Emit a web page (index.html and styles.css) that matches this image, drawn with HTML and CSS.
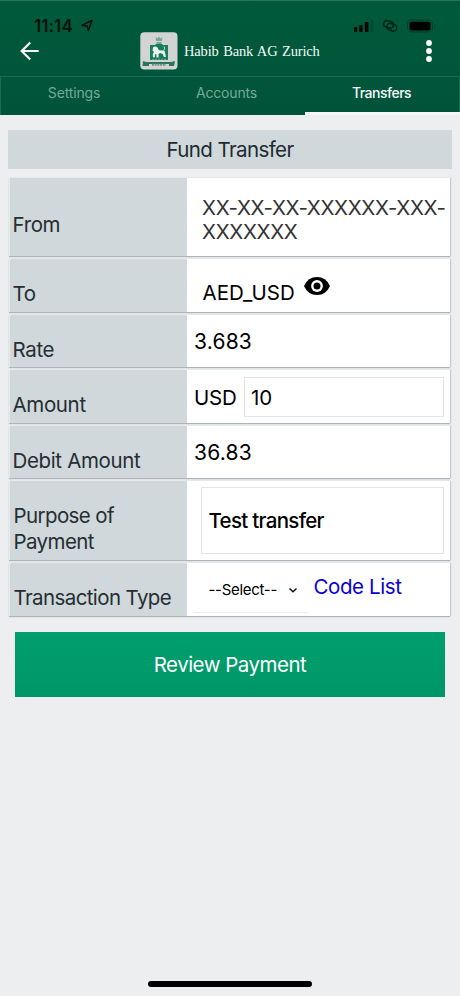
FILE: index.html
```
<!DOCTYPE html>
<html lang="en">
<head>
<meta charset="utf-8">
<meta name="viewport" content="width=device-width">
<title>Fund Transfer</title>
<link rel="stylesheet" href="styles.css">
</head>
<body>
<header class="header">
  <div class="status">
    <span class="time">11:14</span>
    <svg class="location" width="12" height="13" viewBox="0 0 12 13"><path d="M1 6.400 11 1.300 7.400 11.600 6.200 6.900Z" fill="none" stroke="#02120b" stroke-width="1.600" stroke-linejoin="round"/></svg>
    <svg class="indicators" width="84" height="16" viewBox="0 0 84 16">
      <g fill="#010a06"><rect x="1" y="10" width="3.300" height="5" rx=".7"/><rect x="6.200" y="8" width="3.400" height="7" rx=".7"/><rect x="11.800" y="5" width="3.700" height="10" rx=".7"/></g>
      <rect x="17.400" y="2.500" width="3" height="12.500" rx=".7" fill="#004a30"/>
      <g fill="none" stroke="#022117" stroke-width="1.400"><rect x="30.500" y="4.100" width="10" height="6.600" rx="3.300" transform="rotate(18 35.500 7.400)"/><rect x="33.800" y="7" width="10" height="6.600" rx="3.300" transform="rotate(18 38.800 10.300)"/></g>
      <rect x="54.500" y="3" width="25" height="12" rx="3.300" fill="none" stroke="#003d28"/><rect x="56.500" y="4.700" width="21" height="8.800" rx="1.800" fill="#000"/><path d="M81.500 7v4q2-2 0-4" fill="#003d28"/>
    </svg>
  </div>
  <div class="brandbar">
    <svg class="back" width="20" height="20" viewBox="0 0 20 20"><path d="M18.700 10H2M10.200 1.500 1.700 10l8.500 8.500" fill="none" stroke="#fff" stroke-width="2.200"/></svg>
    <svg class="crest" width="38" height="38" viewBox="0 0 38 38">
      <rect x=".3" y=".3" width="37.200" height="37.200" rx="4" fill="#d2d4d3"/>
      <path d="M15.500 5l2 1.500L19 4.500l1.500 2 2-1.500-.7 4h-5.600zM16.500 10h5v2.500h-5z" fill="#79a695"/>
      <path d="M10 13h5l1-1h6l1 1h5v15H10z" fill="#187d5d"/>
      <path d="M13 15.500q1.500-1.700 3.500-.8 1.700.8 2 3.100 2 1 4.500.4 2 0 2.100 2.500l.9 4.200h-2.200l-1-3-2.700-1-1.600 1 .2 3.500h-2.200l-.2-3.700-1.500 1 .2 2.500h-2l-.2-3.200 1.200-2-1.500-1.500z" fill="#edf2ef"/>
      <path d="M24 18.500q1.200-2.700 0-4" fill="none" stroke="#edf2ef" stroke-width=".8"/>
      <path d="M12 27.300h14" stroke="#75a58e" stroke-dasharray="2 1"/>
      <path d="M3 29l3 1h25l4-1-1 5h-5v-2H9v2H2.500z" fill="#28775b"/><path d="M12 32.800h14" stroke="#6b9583" stroke-width="2" stroke-dasharray="2 .7"/>
    </svg>
    <span class="brand">Habib Bank AG Zurich</span>
    <svg class="more" width="8" height="24" viewBox="0 0 8 24" fill="#fff"><circle cx="4" cy="4" r="2.900"/><circle cx="4" cy="12" r="2.900"/><circle cx="4" cy="20" r="2.900"/></svg>
  </div>
  <nav class="tabs"><a class="tab settings">Settings</a><a class="tab accounts">Accounts</a><a class="tab active">Transfers</a></nav>
</header>
<main class="content">
  <h1 class="title"><span>Fund Transfer</span></h1>
  <section class="form">
    <div class="row from"><div class="label">From</div><div class="value masked"><span>XX-XX-XX-XXXXXX-XXX-</span><br><span>XXXXXXX</span></div></div>
    <div class="row"><div class="label">To</div><div class="value account"><span>AED_USD</span><svg class="eye" width="26" height="18" viewBox="0 0 26 18"><path d="M0 9Q4 0 13 0t13 9q-4 9-13 9T0 9" fill="#000"/><circle cx="13" cy="9" r="5.900" fill="#fff"/><circle cx="13" cy="9" r="3.500" fill="#000"/></svg></div></div>
    <div class="row"><div class="label">Rate</div><div class="value number">3.683</div></div>
    <div class="row"><div class="label">Amount</div><div class="value amount"><span class="currency">USD</span><div class="field">10</div></div></div>
    <div class="row"><div class="label">Debit Amount</div><div class="value number">36.83</div></div>
    <div class="row purpose"><div class="label">Purpose of<br>Payment</div><div class="value"><div class="field memo"><span>Test transfer</span></div></div></div>
    <div class="row transaction"><div class="label">Transaction Type</div><div class="value choices"><div class="select"><span>--Select--</span><svg width="10" height="7" viewBox="0 0 10 7"><path d="m1.500 1.500 3.500 3.300 3.500-3.300" fill="none" stroke="#111" stroke-width="1.500"/></svg></div><a class="codes">Code List</a></div></div>
  </section>
  <div class="review"><span>Review Payment</span></div>
</main>
<div class="home"></div>
</body>
</html>
```
FILE: styles.css
```
* { box-sizing: border-box; }
body { margin: 0; width: 460px; height: 996px; overflow: hidden; display: flex; flex-direction: column; background: #eceef0; font-family: Inter, "Liberation Sans", sans-serif; color: #000; }
svg { display: block; flex: none; }
.header { height: 115px; flex: none; background: linear-gradient(#005a3b, #00563a 60%, #005339); border-top: 1px solid #247657; }
.status { height: 31px; padding: 15px 23px 0 34px; display: flex; align-items: flex-start; }
.time { width: 43px; font-size: 17px; line-height: 20px; font-weight: 600; letter-spacing: .1px; white-space: nowrap; color: #02100a; }
.location { margin: 3px 0 0 4px; }
.indicators { margin: 1px 0 0 auto; }
.brandbar { height: 44px; display: flex; padding-left: 20px; }
.back { margin-top: 9px; }
.crest { margin: 0 0 0 99.500px; }
.brand { margin: 9px 0 0 6.500px; width: 138px; font: 14.500px/20px "Liberation Serif", serif; letter-spacing: -.15px; word-spacing: 1px; color: #f3faf6; white-space: nowrap; }
.more { margin: 7px 0 0 102.500px; }
.tabs { height: 39px; border: 1px solid #176d50; border-bottom: 0; display: grid; grid-template-columns: 152px 152px 154px; }
.tab { font-size: 14px; line-height: 20px; padding-top: 6px; letter-spacing: -.15px; text-align: center; color: #76aa96; }
.settings { padding-right: 6px; }
.accounts { padding-right: 5px; }
.active { color: #f5faf8; border-bottom: 3px solid #f5f6f7; margin-right: -1px; padding-right: 2px; font-weight: 500; letter-spacing: -.5px; }
.content { display: flex; flex-direction: column; }
.title { margin: 15px 8px 9px; height: 39px; padding-top: 8px; background: #d0d8db; text-align: center; font-size: 20.500px; line-height: 24px; font-weight: 400; letter-spacing: -.6px; color: #202a2f; }
.form { margin-left: 8.500px; width: 441.500px; display: grid; gap: 3px; }
.row { display: grid; grid-template-columns: 177.500px 1fr; height: 52.500px; background: #fff; box-shadow: 0 1px 1px #aeb4b7, 1px 0 1px #cbd0d3; border-left: 1px solid #e6ebed; }
.from { height: 78px; }
.purpose { height: 79px; }
.label { background: #d0d8db; color: #252e32; padding: 0 0 5.500px 3px; display: flex; align-items: flex-end; font-size: 20.500px; line-height: 24px; letter-spacing: -.35px; white-space: nowrap; }
.from .label { padding-bottom: 19px; }
.value { font-size: 20.500px; line-height: 24px; letter-spacing: -.2px; white-space: nowrap; }
.masked { padding: 17.500px 0 0 15px; color: #333; letter-spacing: -.35px; }
.account { padding: 22px 0 0 15.500px; display: flex; letter-spacing: 0; }
.eye { margin: -4px 0 0 9.500px; }
.number { padding: 15px 0 0 7px; font-size: 21px; letter-spacing: .2px; }
.amount { padding: 7px 6px 0 7px; display: flex; }
.currency { width: 50px; padding-top: 8.500px; }
.field { flex: 1; height: 40px; border: 1px solid #e3e5e6; padding: 8px 6px; }
.purpose .label { line-height: 26px; padding-left: 4px; padding-bottom: 5px; letter-spacing: -.6px; }
.memo { height: 67px; margin: 6px 6px 0 13.500px; padding: 21px 7px; letter-spacing: -.7px; font-weight: 500; }
.transaction { height: 53px; }
.transaction .label { padding-left: 4px; padding-bottom: 6px; letter-spacing: -.6px; }
.choices { display: flex; }
.select { width: 114px; height: 50px; margin-left: 7px; padding: 16px 0 0 14.500px; border-bottom: 1px solid #eee; font-size: 15px; letter-spacing: -.3px; line-height: 22px; display: flex; }
.select svg { margin: 8px 0 0 11px; }
.codes { color: #0900d7; padding: 12px 0 0 5.500px; letter-spacing: -.4px; }
.review { width: 430px; height: 64.500px; margin: 16px 0 0 15px; padding-top: 21px; text-align: center; background: linear-gradient(#009f6e, #009667); color: #fff; font-size: 20.500px; line-height: 24px; letter-spacing: -.5px; }
.home { width: 164px; height: 6px; border-radius: 3px; background: #000; margin: auto 0 9px 148px; }
```
